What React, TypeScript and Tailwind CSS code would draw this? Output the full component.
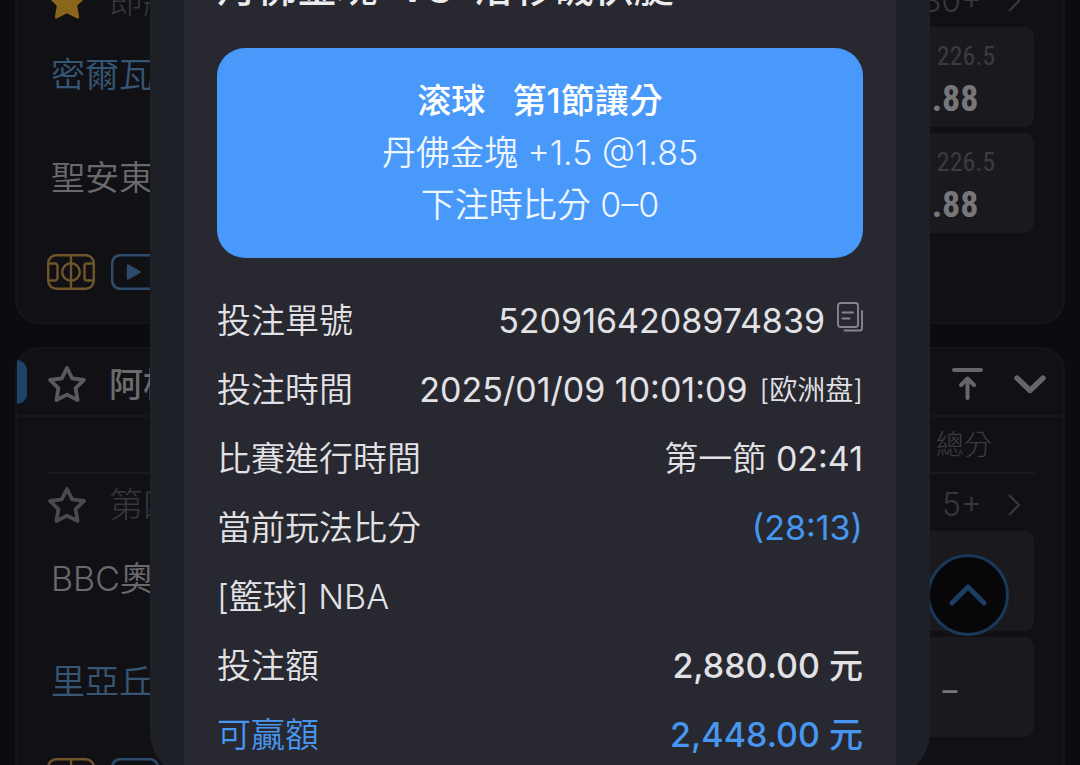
import type { ReactNode } from "react";

const FONT = "font-[Inter,'Noto_Sans_CJK_TC',sans-serif]";
const ODDS_FONT = "font-['Roboto_Condensed',Roboto,'Noto_Sans_CJK_TC',sans-serif]";

function StarIcon({ filled = false }: { filled?: boolean }) {
  return (
    <svg
      className="h-10 w-10"
      viewBox="0 0 40 40"
      fill={filled ? "currentColor" : "none"}
      stroke="currentColor"
      strokeWidth={filled ? 3 : 3.8}
      strokeLinejoin="round"
      aria-hidden="true"
    >
      <path d="M20 4l5.200 10.400L37 16l-8.400 8.200L30.600 36 20 30.600 9.400 36l2-11.800L3 16l11.800-1.600z" />
    </svg>
  );
}

function CourtIcon() {
  return (
    <svg className="h-9 w-12" viewBox="0 0 48 36" fill="none" stroke="currentColor" strokeWidth="2.4" aria-hidden="true">
      <rect x="1.2" y="1.2" width="45.6" height="33.6" rx="8" />
      <path d="M24 1v34" />
      <circle cx="24" cy="18" r="8.8" />
      <path d="M1.500 9.500H8a2.500 2.500 0 0 1 2.500 2.500v12A2.500 2.500 0 0 1 8 26.500H1.500M46.500 9.500H40a2.500 2.500 0 0 0-2.500 2.500v12a2.500 2.500 0 0 0 2.500 2.500h6.500" />
    </svg>
  );
}

function PlayIcon() {
  return (
    <svg className="h-9 w-12" viewBox="0 0 48 36" fill="none" aria-hidden="true">
      <rect x="1.2" y="1.2" width="45.6" height="33.6" rx="8" stroke="currentColor" strokeWidth="2.6" />
      <path d="M17 11.500v13l11.500-6.500z" fill="currentColor" stroke="currentColor" strokeWidth="2.5" strokeLinejoin="round" />
    </svg>
  );
}

function CopyIcon() {
  return (
    <svg className="h-[30px] w-[26px]" viewBox="0 0 26 30" fill="none" stroke="currentColor" strokeWidth="1.9" strokeLinecap="round" aria-hidden="true">
      <rect x="1" y="1" width="20" height="24" rx="2.5" />
      <path d="M5.500 10.500h10.500M5.500 16.500h7M25 9v17.500a2 2 0 0 1-2 2H7.500" />
    </svg>
  );
}

type Odds = { line?: string; price: string };

function OddsCell({ line, price }: Odds) {
  return (
    <button className="flex h-[100px] w-[168px] flex-col items-center justify-center rounded-[10px] bg-[#1a1a1e] pt-1">
      {line && <span className={`${ODDS_FONT} text-[26px] leading-10 text-[#3c3c40]`}>{line}</span>}
      <span className={`${ODDS_FONT} text-[36px] leading-[46px] text-[#77777a] ${line ? "pr-2 font-bold" : "pt-2 font-normal"}`}>{price}</span>
    </button>
  );
}

type MatchProps = {
  clock: string;
  favourite?: boolean;
  more: string;
  teams: { name: string; leading?: boolean }[];
  odds: Odds[];
};

function Match({ clock, favourite, more, teams, odds }: MatchProps) {
  return (
    <div className="mr-[29px] ml-[30px] pb-8">
      <div className="flex h-[57px] items-center justify-between pt-1">
        <div className="flex items-center gap-[22px] text-[34px] font-light text-[#38383c]">
          <button aria-label="收藏" className={favourite ? "text-[#8a651c]" : "text-[#4a4a4d]"}>
            <StarIcon filled={favourite} />
          </button>
          <span>{clock}</span>
        </div>
        <button className="flex items-center gap-6 pr-3 text-[32px] font-light text-[#38383c]">
          {more}
          <svg className="h-6 w-4" viewBox="0 0 16 24" fill="none" stroke="#3a3a3e" strokeWidth="2" aria-hidden="true">
            <path d="M3 2l10 10L3 22" />
          </svg>
        </button>
      </div>
      <div className="flex justify-between">
        <div className="flex flex-col pl-1 text-[34px] font-[350]">
          {teams.map((t) => (
            <div key={t.name} className={`flex h-[103px] items-center pb-2 ${t.leading ? "text-[#365674]" : "text-[#6a6a6d]"}`}>
              {t.name}
            </div>
          ))}
        </div>
        <div className="flex flex-col gap-[6px]">
          {odds.map((o, i) => (
            <OddsCell key={i} {...o} />
          ))}
        </div>
      </div>
      <div className="mt-[21px] flex gap-4">
        <button aria-label="球場" className="text-[#70552a]">
          <CourtIcon />
        </button>
        <button aria-label="直播" className="text-[#2d4c6c]">
          <PlayIcon />
        </button>
      </div>
    </div>
  );
}

function Row({ label, children, accent }: { label: string; children?: ReactNode; accent?: boolean }) {
  return (
    <div className={`flex h-[69px] items-center justify-between ${accent ? "text-[#4796ef]" : "text-[#e2e2e6]"}`}>
      <dt>{label}</dt>
      <dd className="flex items-center">{children}</dd>
    </div>
  );
}

function BetDialog() {
  return (
    <section role="dialog" aria-label="投注詳情" className="-mt-24 flex-1 self-start rounded-[50px] bg-[#1e2028] px-[34px]">
      <div className="bg-[#282830] px-[33px] pt-14 pb-3 text-[34px] font-[350]">
        <h2 className="mb-8 text-[40px] leading-14 font-medium whitespace-pre text-[#ececef]">丹佛金塊  VS  洛杉磯快艇</h2>
        <div className="rounded-[28px] bg-[#4899fa] pt-[27px] pb-[27px] text-center leading-[52px] text-[#eef6ff]">
          <p className="font-medium whitespace-pre text-white">滚球   第1節讓分</p>
          <p>丹佛金塊 +1.5 @1.85</p>
          <p className="whitespace-pre">下注時比分 0–0</p>
        </div>
        <dl className="mt-7">
          <Row label="投注單號">
            <span className="font-normal">5209164208974839</span>
            <button aria-label="複製" className="mb-2 ml-3 text-[#85858d]">
              <CopyIcon />
            </button>
          </Row>
          <Row label="投注時間">
            <span className="font-normal">2025/01/09 10:01:09</span>
            <span className="ml-3 font-[Inter,'Noto_Sans_CJK_SC',sans-serif] text-[28px]">[欧洲盘]</span>
          </Row>
          <Row label="比賽進行時間">
            <span className="whitespace-pre">
              第一節 <span className="font-normal">02:41</span>
            </span>
          </Row>
          <Row label="當前玩法比分">
            <span className="font-normal text-[#4796ef]">(28:13)</span>
          </Row>
          <Row label="[籃球] NBA" />
          <Row label="投注額">
            <span className="font-medium">2,880.00 元</span>
          </Row>
          <Row label="可贏額" accent>
            <span className="font-medium">2,448.00 元</span>
          </Row>
        </dl>
      </div>
    </section>
  );
}

export default function App() {
  return (
    <div className={`relative h-screen overflow-hidden bg-[#0b0b10] ${FONT}`}>
      <main className="-mt-8 flex flex-col gap-[23px] px-[15px]">
        <article className="rounded-b-[24px] border-2 border-[#16161a] bg-[#111115]">
          <Match
            clock="即將"
            favourite
            more="30+"
            teams={[{ name: "密爾瓦", leading: true }, { name: "聖安東" }]}
            odds={[
              { line: "大 226.5", price: "1.88" },
              { line: "小 226.5", price: "1.88" },
            ]}
          />
        </article>
        <article className="rounded-[24px] border-2 border-[#16161a] bg-[#111115]">
          <header className="flex h-[68px] items-center border-b-2 border-[#18181c] pr-4">
            <span className="h-11 w-[10px] rounded-r-[10px] bg-[#1d4468]" />
            <div className="flex flex-1 items-center pt-1 pl-5">
              <button aria-label="收藏" className="text-[#5a5a5d]">
                <StarIcon />
              </button>
              <h3 className="ml-[22px] flex-1 text-[34px] font-medium text-[#6c6c6f]">阿根</h3>
              <button aria-label="置頂" className="text-[#66666a]">
                <svg className="h-9 w-9" viewBox="0 0 36 36" fill="none" stroke="currentColor" strokeWidth="4" strokeLinecap="round" strokeLinejoin="round" aria-hidden="true">
                  <path d="M5 4h27M18.500 32V13M12 19l6.500-6.500L25 19" />
                </svg>
              </button>
              <button aria-label="收合" className="ml-[26px] text-[#66666a]">
                <svg className="h-9 w-9" viewBox="0 0 36 36" fill="none" stroke="currentColor" strokeWidth="5.4" strokeLinecap="round" strokeLinejoin="round" aria-hidden="true">
                  <path d="M6 12l13 12.500L32 12" />
                </svg>
              </button>
            </div>
          </header>
          <div className="mr-[29px] ml-[30px] flex h-[57px] items-center justify-end border-b-2 border-[#1b1b1f] pr-[42px] text-[28px] font-light text-[#3c3c40]">
            總分
          </div>
          <Match
            clock="第四"
            more="5+"
            teams={[{ name: "BBC奧" }, { name: "里亞丘", leading: true }]}
            odds={[{ price: "–" }, { price: "–" }]}
          />
        </article>
      </main>
      <button
        aria-label="回到頂部"
        className="absolute right-[71px] bottom-[129px] flex h-[82px] w-[82px] items-center justify-center rounded-full border-3 border-[#19395a] bg-[#070709] text-[#1b3e61]"
      >
        <svg className="h-10 w-10" viewBox="0 0 40 40" fill="none" stroke="currentColor" strokeWidth="5" strokeLinecap="round" strokeLinejoin="round" aria-hidden="true">
          <path d="M4 28l16-16 16 16" />
        </svg>
      </button>
      <div className="absolute inset-0 flex px-[150px]">
        <BetDialog />
      </div>
    </div>
  );
}
